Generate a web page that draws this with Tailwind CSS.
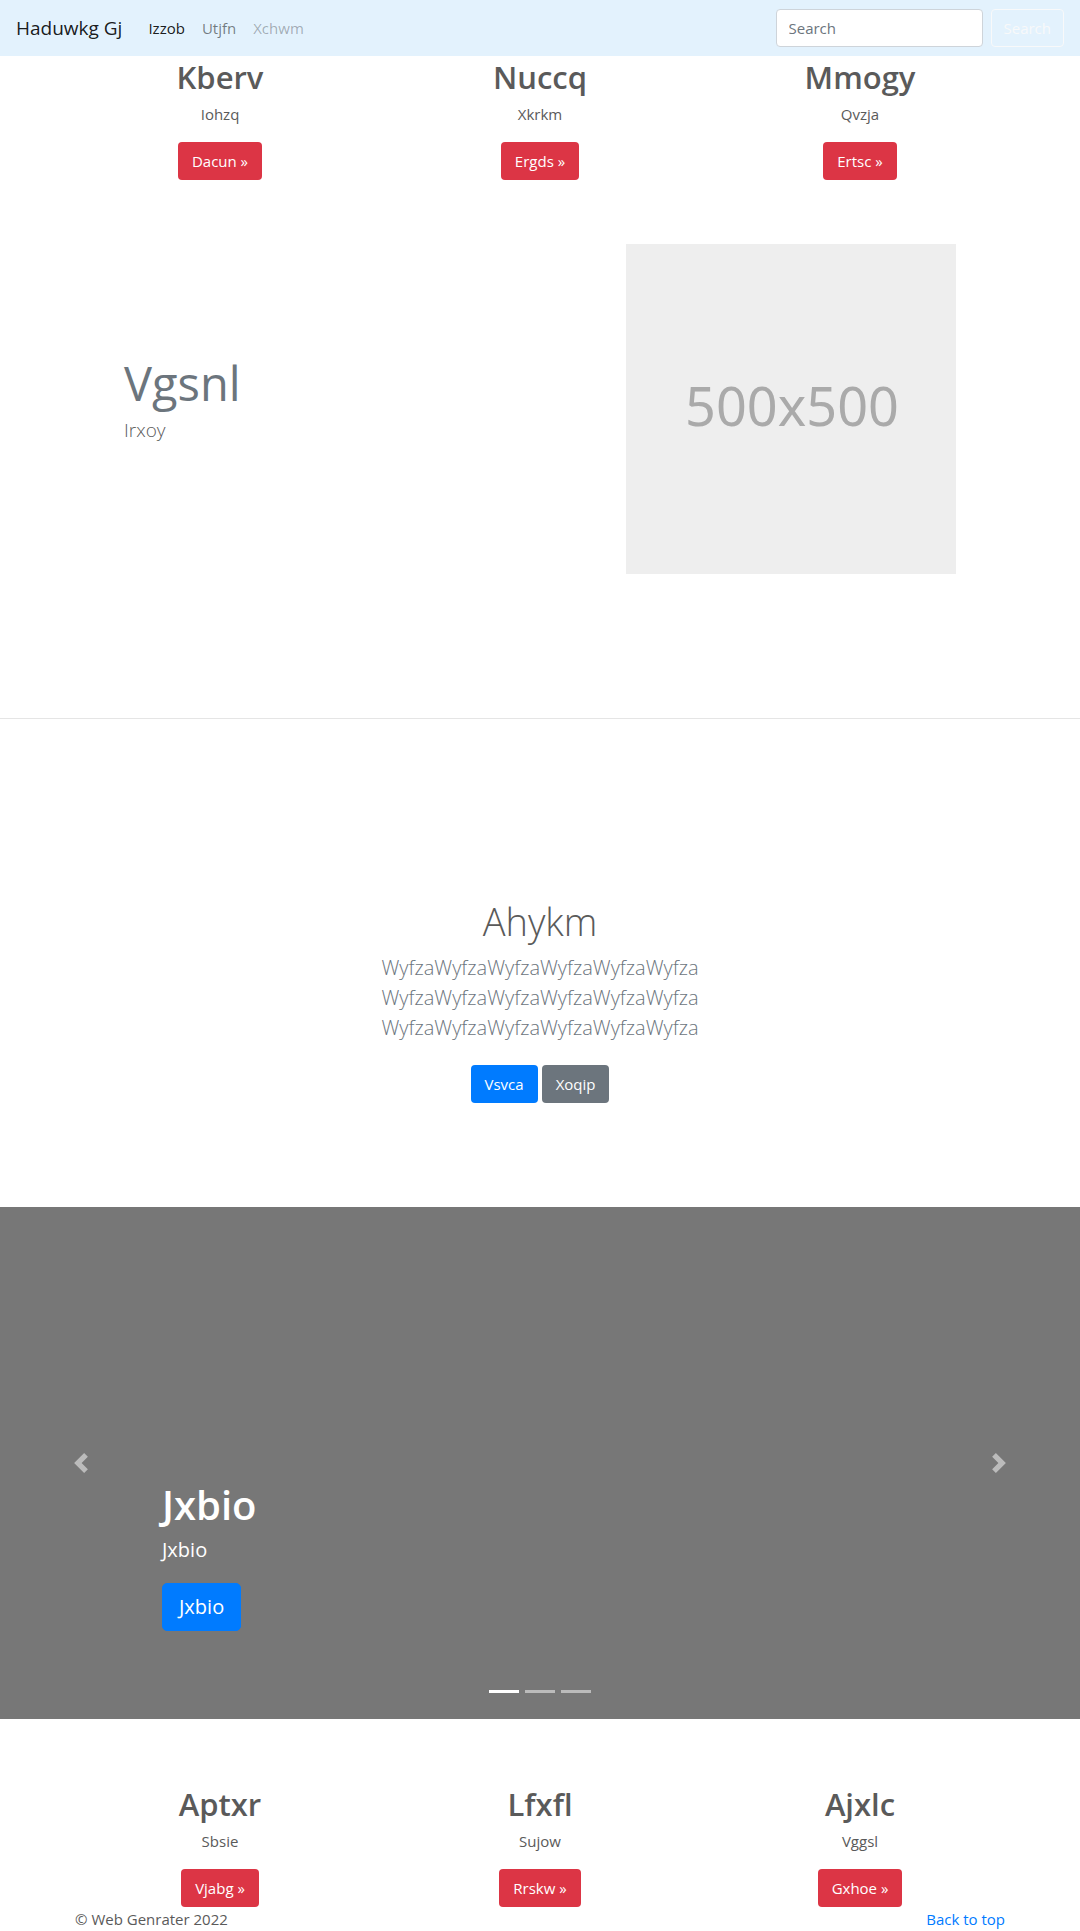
<!DOCTYPE html>
<html lang="en">
<head>
<meta charset="utf-8">
<meta name="viewport" content="width=device-width, initial-scale=1">
<title>Haduwkg Gj</title>
<script src="https://cdn.jsdelivr.net/npm/@tailwindcss/browser@4"></script>
</head>
<body class="bg-white font-['Open_Sans','Noto_Sans',sans-serif] text-[15px] leading-6 text-[#5a5a5a]">
<header id="top">
  <nav class="flex flex-wrap items-center justify-between bg-[#e3f2fd] px-4 py-[9px]">
    <div class="flex items-center gap-[26px]">
      <a href="#" class="text-[19px] leading-[30px] text-black/90">Haduwkg Gj</a>
      <ul class="flex gap-[17px]">
        <li><a href="#" class="text-black/90">Izzob</a></li>
        <li><a href="#" class="text-black/50">Utjfn</a></li>
        <li><a href="#" class="text-black/30">Xchwm</a></li>
      </ul>
    </div>
    <form class="flex gap-2">
      <input type="search" placeholder="Search" aria-label="Search" class="h-[38px] w-[207px] rounded border border-[#ced4da] bg-white px-3 placeholder:text-[#6c757d]">
      <button type="button" class="rounded border border-[#f8f9fa] px-3 py-1.5 leading-6 text-[#f8f9fa]">Search</button>
    </form>
  </nav>
</header>

<main>
  <section class="mx-auto grid max-w-[960px] grid-cols-3 text-center">
    <div class="flex flex-col items-center">
      <h2 class="mb-1 text-[31px] leading-[42px] font-semibold">Kberv</h2>
      <p class="mb-4">Iohzq</p>
      <a href="#" class="rounded bg-[#dc3545] px-3.5 py-[7px] text-white">Dacun »</a>
    </div>
    <div class="flex flex-col items-center">
      <h2 class="mb-1 text-[31px] leading-[42px] font-semibold">Nuccq</h2>
      <p class="mb-4">Xkrkm</p>
      <a href="#" class="rounded bg-[#dc3545] px-3.5 py-[7px] text-white">Ergds »</a>
    </div>
    <div class="flex flex-col items-center">
      <h2 class="mb-1 text-[31px] leading-[42px] font-semibold">Mmogy</h2>
      <p class="mb-4">Qvzja</p>
      <a href="#" class="rounded bg-[#dc3545] px-3.5 py-[7px] text-white">Ertsc »</a>
    </div>
  </section>

  <section class="mx-auto mt-16 mb-36 flex max-w-[832px] items-start justify-between">
    <div class="pt-[109px]">
      <h2 class="mb-0.5 text-[47px] leading-[60px] text-[#6c757d]">Vgsnl</h2>
      <p class="text-[19px] leading-[30px] font-light">Irxoy</p>
    </div>
    <svg viewBox="0 0 330 330" class="w-[330px]" role="img" aria-label="500x500">
      <rect width="330" height="330" fill="#eee"/>
      <text x="166" y="182" text-anchor="middle" font-size="54" fill="#aaa" font-family="Noto Sans, sans-serif">500x500</text>
    </svg>
  </section>

  <hr class="border-black/10">

  <section class="px-4 pt-[178px] pb-[104px] text-center">
    <h1 class="mb-2 text-[38px] leading-[48px] font-light">Ahykm</h1>
    <p class="mb-[22px] text-[20px] leading-[30px] font-light text-[#6c757d]">WyfzaWyfzaWyfzaWyfzaWyfzaWyfza<br>WyfzaWyfzaWyfzaWyfzaWyfzaWyfza<br>WyfzaWyfzaWyfzaWyfzaWyfzaWyfza</p>
    <div class="flex justify-center gap-1">
      <a href="#" class="rounded bg-[#007bff] px-3.5 py-[7px] text-white">Vsvca</a>
      <a href="#" class="rounded bg-[#6c757d] px-3.5 py-[7px] text-white">Xoqip</a>
    </div>
  </section>

  <section class="relative flex h-[512px] flex-col justify-end bg-[#777] px-[15%] text-white" aria-label="Carousel">
    <div class="flex flex-col items-start pb-[88px]">
      <h1 class="mb-1.5 text-[40px] leading-[48px] font-semibold">Jxbio</h1>
      <p class="mb-[18px] text-[20px] leading-[30px] font-medium">Jxbio</p>
      <a href="#" class="rounded-[5px] border border-[#007bff] bg-[#007bff] px-4 py-2 text-[20px] leading-[30px] font-medium">Jxbio</a>
    </div>
    <button type="button" aria-label="Previous" class="absolute inset-y-0 left-0 flex w-[15%] items-center justify-center opacity-50">
      <svg viewBox="0 0 8 8" class="size-5" fill="#fff"><path d="M5.25 0l-4 4 4 4 1.5-1.5L4.250 4l2.500-2.500L5.250 0z"/></svg>
    </button>
    <button type="button" aria-label="Next" class="absolute inset-y-0 right-0 flex w-[15%] items-center justify-center opacity-50">
      <svg viewBox="0 0 8 8" class="size-5" fill="#fff"><path d="M2.750 0l-1.500 1.500L3.750 4l-2.500 2.500L2.750 8l4-4-4-4z"/></svg>
    </button>
    <div class="absolute inset-x-0 bottom-[26px] flex justify-center gap-1.5">
      <button type="button" aria-label="Slide 1" class="h-[3px] w-[30px] bg-white"></button>
      <button type="button" aria-label="Slide 2" class="h-[3px] w-[30px] bg-white/50"></button>
      <button type="button" aria-label="Slide 3" class="h-[3px] w-[30px] bg-white/50"></button>
    </div>
  </section>

  <section class="mx-auto mt-16 grid max-w-[960px] grid-cols-3 text-center">
    <div class="flex flex-col items-center">
      <h2 class="mb-1 text-[31px] leading-[42px] font-semibold">Aptxr</h2>
      <p class="mb-4">Sbsie</p>
      <a href="#" class="rounded bg-[#dc3545] px-3.5 py-[7px] text-white">Vjabg »</a>
    </div>
    <div class="flex flex-col items-center">
      <h2 class="mb-1 text-[31px] leading-[42px] font-semibold">Lfxfl</h2>
      <p class="mb-4">Sujow</p>
      <a href="#" class="rounded bg-[#dc3545] px-3.5 py-[7px] text-white">Rrskw »</a>
    </div>
    <div class="flex flex-col items-center">
      <h2 class="mb-1 text-[31px] leading-[42px] font-semibold">Ajxlc</h2>
      <p class="mb-4">Vggsl</p>
      <a href="#" class="rounded bg-[#dc3545] px-3.5 py-[7px] text-white">Gxhoe »</a>
    </div>
  </section>
</main>

<footer class="mx-auto flex max-w-[960px] justify-between px-[15px]">
  <p>© Web Genrater 2022</p>
  <a href="#top" class="text-[#007bff]">Back to top</a>
</footer>
</body>
</html>
